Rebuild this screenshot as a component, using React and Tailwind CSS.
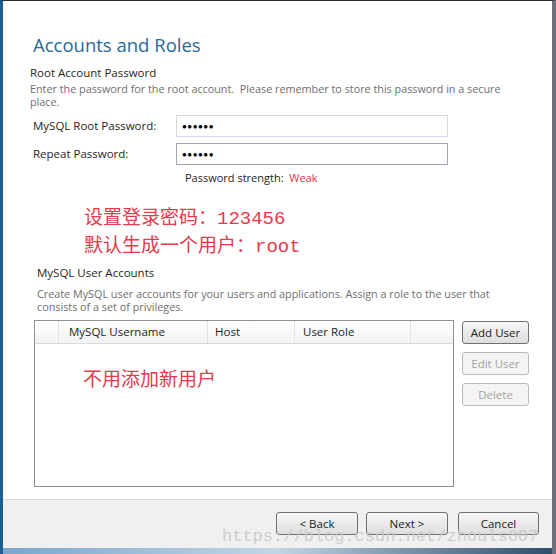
import React from 'react';

const ui = { fontFamily: '"Open Sans", "Noto Sans", sans-serif' };
const cn = { fontFamily: '"Liberation Mono", "Noto Sans CJK SC", monospace' };

const WinButton = ({ children, disabled, className = '' }) => (
    <div
        className={`flex items-center justify-center rounded-[3px] border text-[11.5px] ${
            disabled
                ? 'border-[#b9bcbf] bg-[#f4f4f4] text-[#a3a3a3]'
                : 'border-[#707070] bg-gradient-to-b from-[#f7f7f7] to-[#dedede] text-[#1a1a1a]'
        } ${className}`}
    >
        {children}
    </div>
);

const PasswordRow = ({ label, focused }) => (
    <div className="flex items-center h-[22px]">
        <div className="w-[146px] pl-[3px] text-[11.5px] text-[#1e1e1e]">{label}</div>
        <div
            className={`w-[272px] h-[22px] flex items-center pl-[5px] bg-white border ${
                focused ? 'border-[#9ea6b3]' : 'border-[#d6d9dd]'
            }`}
        >
            <span className="text-[8px] tracking-[0.5px] text-black leading-none">●●●●●●</span>
        </div>
    </div>
);

export default function App() {
    return (
        <div
            className="relative w-[556px] h-[554px] flex flex-col overflow-hidden bg-white border-t border-t-[#2b2b2b] border-l-[3px] border-l-[#1d5d90] border-r-[4px] border-r-[#6c7178]"
            style={ui}
        >
            {/* Page content */}
            <div className="flex-1 pl-[26px] pr-[20px] border-l border-l-[#f3f6f9]">
                <h1 className="mt-[32px] ml-[3px] text-[18.5px] leading-[24px] text-[#2b6898]">Accounts and Roles</h1>

                <div className="mt-[8px] text-[11.5px] leading-[16px] text-[#1e1e1e]">Root Account Password</div>
                <div className="mt-[1px] w-[480px] text-[10.8px] leading-[13px] text-[#6e6e6e]">
                    Enter the password for the root account.&nbsp; Please remember to store this password in a secure place.
                </div>

                <div className="mt-[7px] flex flex-col gap-[6px]">
                    <PasswordRow label="MySQL Root Password:" />
                    <PasswordRow label="Repeat Password:" focused />
                </div>

                <div className="mt-[5px] ml-[155px] text-[11px] leading-[16px] text-[#1e1e1e]">
                    Password strength:&nbsp; <span className="text-[#e5333d]">Weak</span>
                </div>

                {/* Annotation */}
                <div className="mt-[19px] ml-[54px] text-[19px] leading-[28px] text-[#e53a4a]" style={cn}>
                    <div>设置登录密码：123456</div>
                    <div>默认生成一个用户：root</div>
                </div>

                <div className="mt-[4px] ml-[7px] text-[11.5px] leading-[16px] text-[#1e1e1e]">MySQL User Accounts</div>
                <div className="mt-[6px] ml-[7px] w-[470px] text-[10.8px] leading-[13px] text-[#6e6e6e]">
                    Create MySQL user accounts for your users and applications. Assign a role to the user that consists of a set of privileges.
                </div>

                <div className="mt-[7px] ml-[4px] flex gap-[8px]">
                    {/* Accounts table */}
                    <div className="w-[420px] h-[167px] border border-[#8e8f8f] bg-white flex flex-col">
                        <div className="h-[23px] flex border-b border-b-[#dadcdf] bg-gradient-to-b from-white to-[#f1f2f4] text-[11.5px] text-[#1e1e1e]">
                            <div className="w-[24px] border-r border-r-[#e2e3e5]" />
                            <div className="w-[149px] pl-[10px] flex items-center border-r border-r-[#e2e3e5]">MySQL Username</div>
                            <div className="w-[87px] pl-[7px] flex items-center border-r border-r-[#e2e3e5]">Host</div>
                            <div className="w-[116px] pl-[8px] flex items-center border-r border-r-[#e2e3e5]">User Role</div>
                            <div className="flex-1" />
                        </div>
                        <div
                            className="mt-[20px] ml-[48px] text-[19px] leading-[28px] text-[#e53a4a]"
                            style={{ fontFamily: '"Noto Sans CJK SC", sans-serif' }}
                        >
                            不用添加新用户
                        </div>
                    </div>

                    <div className="flex flex-col gap-[8px] pt-[1px]">
                        <WinButton className="w-[67px] h-[23px]">Add User</WinButton>
                        <WinButton disabled className="w-[67px] h-[23px]">Edit User</WinButton>
                        <WinButton disabled className="w-[67px] h-[23px]">Delete</WinButton>
                    </div>
                </div>
            </div>

            {/* Footer */}
            <div className="h-[49px] border-t border-t-[#d9d9d9] bg-[#f0f0f0] flex justify-end items-start pt-[12px] pr-[13px]">
                <WinButton className="w-[82px] h-[23px]">&lt; Back</WinButton>
                <WinButton className="ml-[8px] w-[82px] h-[23px]">Next &gt;</WinButton>
                <WinButton className="ml-[10px] w-[81px] h-[23px]">Cancel</WinButton>
            </div>
            <div className="h-[6px] bg-gradient-to-r from-[#7aa6cc] via-[#c3d6e6] to-[#2f4e6b]" />

            {/* Watermark */}
            <div
                className="absolute left-[219px] top-[524px] text-[17px] leading-[24px] text-[#cbcbcb] opacity-90 pointer-events-none"
                style={{ fontFamily: '"Liberation Mono", monospace' }}
            >
                https://blog.csdn.net/zhouls007
            </div>
        </div>
    );
}
